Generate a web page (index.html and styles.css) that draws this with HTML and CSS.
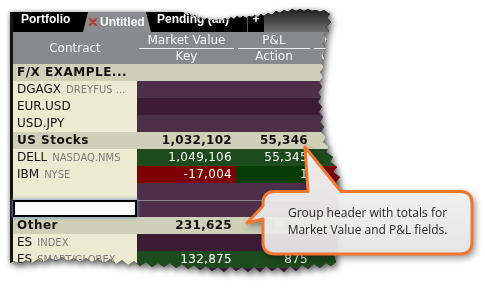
FILE: index.html
```html
<!DOCTYPE html>
<html lang="en">
<head>
    <meta charset="UTF-8">
    <title>Portfolio group header</title>
    <link rel="stylesheet" href="styles.css">
</head>
<body>
    <div class="sheet">
        <div class="paper">
            <div class="tabbar">
                <div class="tab tab-portfolio">Portfolio</div>
                <div class="tab tab-active">
                    <svg class="close" width="8" height="8" viewBox="0 0 8 8"><path d="M1 1L7 7M7 1L1 7" stroke="#c23a32" stroke-width="2.4" stroke-linecap="round"/></svg>
                    Untitled
                </div>
                <div class="tab tab-pending">Pending (all)</div>
                <div class="tab tab-plus">+</div>
                <div class="tab-rest"></div>
            </div>
            <div class="head">
                <div class="hc hc-contract">Contract</div>
                <div class="hc"><span class="top">Market Value</span><span>Key</span></div>
                <div class="hc"><span class="top">P&amp;L</span><span>Action</span></div>
                <div class="hc"><span class="top">Position</span><span>Quantity</span></div>
            </div>
            <div class="rows">
                <div class="row group"><div class="c">F/X EXAMPLE...</div><div class="n"></div><div class="n"></div><div></div></div>
                <div class="row pl"><div class="c">DGAGX<span class="ex">DREYFUS ...</span></div><div class="n"></div><div class="n"></div><div></div></div>
                <div class="row pd"><div class="c">EUR.USD</div><div class="n"></div><div class="n"></div><div></div></div>
                <div class="row pl"><div class="c">USD.JPY</div><div class="n"></div><div class="n"></div><div></div></div>
                <div class="row group"><div class="c">US Stocks</div><div class="n">1,032,102</div><div class="n">55,346</div><div></div></div>
                <div class="row g"><div class="c">DELL<span class="ex">NASDAQ.NMS</span></div><div class="n">1,049,106</div><div class="n">55,345</div><div></div></div>
                <div class="row r"><div class="c">IBM<span class="ex">NYSE</span></div><div class="n">-17,004</div><div class="n gd">1</div><div></div></div>
                <div class="row pl"><div class="c"></div><div class="n"></div><div class="n"></div><div></div></div>
                <div class="row pl sep"><div class="c sel"></div><div class="n"></div><div class="n"></div><div></div></div>
                <div class="row group"><div class="c">Other</div><div class="n">231,625</div><div class="n faint">1,275</div><div></div></div>
                <div class="row pd"><div class="c">ES<span class="ex">INDEX</span></div><div class="n"></div><div class="n"></div><div></div></div>
                <div class="row g"><div class="c">ES<span class="ex">SMART/GLOBEX</span></div><div class="n">132,875</div><div class="n">875</div><div></div></div>
                <div class="row pd"><div class="c"></div><div class="n"></div><div class="n"></div><div></div></div>
            </div>
        </div>
    </div>

    <svg class="callout" width="485" height="290" viewBox="0 0 485 290">
        <defs>
            <linearGradient id="fill" x1="0" y1="0" x2="0" y2="1">
                <stop offset="0" stop-color="#ffffff"/>
                <stop offset="1" stop-color="#ebebeb"/>
            </linearGradient>
        </defs>
        <path d="M275 191.5 L308 191.5 L305 147 L341 191.5 L460 191.5 Q472 191.5 472 203.5 L472 242 Q472 254 460 254 L275 254 Q263 254 263 242 L263 219 L247 223 L263 206 L263 203.5 Q263 191.5 275 191.5 Z"
              fill="url(#fill)" fill-opacity="0.92" stroke="#f27630" stroke-width="3" stroke-linejoin="round"/>
    </svg>
    <div class="callout-text">Group header with totals for<br>Market Value and P&amp;L fields.</div>
</body>
</html>
```

FILE: styles.css
```css
body {
    margin: 0;
    width: 485px;
    height: 290px;
    overflow: hidden;
    position: relative;
    background: #fff;
    font-family: "DejaVu Sans", Verdana, sans-serif;
}
.sheet {
    padding: 8px 0 0 10px;
    filter: drop-shadow(2px 3px 3px rgba(0, 0, 0, 0.5)) drop-shadow(0 0 2px rgba(0, 0, 0, 0.3));
}
.paper {
    width: 372px;
    height: 266px;
    border-left: 3px solid #141414;
    background: #4b2d47;
    clip-path: polygon(
        0 4px, 173px 4px,
        176px 7px, 179px 5px, 182px 9px, 185px 7px, 188px 11px, 191px 9px, 194px 12px, 197px 10px,
        200px 13px, 203px 11px, 206px 13px, 209px 11px, 212px 13px, 215px 10px, 218px 12px, 221px 9px,
        224px 11px, 227px 8px, 230px 10px, 233px 8px, 236px 10px, 239px 8px, 242px 9px, 245px 7px,
        248px 9px, 251px 6px, 254px 8px, 258px 5px, 262px 7px, 266px 3px, 270px 5px, 274px 2px,
        278px 4px, 282px 1px, 286px 3px, 290px 1px, 294px 3px, 298px 1px, 302px 3px, 306px 2px,
        310px 4px, 314px 2px, 318px 5px,
        320px 6px, 317px 10px, 321px 14px, 316px 19px, 319px 23px, 314px 27px, 317px 32px, 313px 36px,
        316px 41px, 312px 46px, 315px 50px, 311px 55px, 314px 59px, 310px 64px, 313px 69px, 309px 74px,
        312px 79px, 308px 84px, 311px 89px, 308px 94px, 312px 99px, 309px 104px, 313px 109px, 310px 114px,
        314px 119px, 311px 124px, 316px 129px, 313px 134px, 319px 139px, 316px 144px, 323px 149px,
        320px 154px, 327px 159px, 323px 164px, 330px 169px, 326px 174px, 329px 180px, 325px 187px,
        329px 197px, 325px 207px, 329px 217px, 326px 227px, 328px 237px, 324px 247px, 326px 254px,
        321px 258px, 316px 255px, 310px 260px, 304px 256px, 298px 261px, 292px 257px, 286px 263px,
        280px 258px, 274px 264px, 268px 259px, 262px 263px, 256px 258px, 250px 264px, 244px 259px,
        238px 264px, 232px 259px, 226px 263px, 220px 258px, 214px 264px, 208px 259px, 202px 263px,
        196px 258px, 190px 262px, 184px 257px, 178px 261px, 172px 256px, 166px 260px, 160px 255px,
        154px 259px, 148px 255px, 142px 259px, 136px 254px, 130px 258px, 124px 253px, 118px 257px,
        112px 252px, 106px 256px, 100px 251px, 94px 255px, 88px 251px, 82px 254px, 76px 250px,
        70px 254px, 64px 250px, 58px 253px, 52px 249px, 46px 253px, 40px 250px, 34px 254px,
        28px 251px, 22px 255px, 16px 252px, 10px 256px, 4px 253px, 0 255px);
}

/* tab strip */
.tabbar {
    display: flex;
    align-items: flex-end;
    height: 24px;
    background: #000;
}
.tab {
    height: 20px;
    line-height: 20px;
    box-sizing: border-box;
    color: #fff;
    font: bold 12px "Liberation Sans", Arial, sans-serif;
    white-space: nowrap;
}
.tab-portfolio {
    width: 70px;
    padding-left: 8px;
}
.tab-active {
    width: 68px;
    padding-left: 6px;
    display: flex;
    align-items: center;
    gap: 3px;
    background: #8a8c8f;
    clip-path: polygon(5px 0, calc(100% - 5px) 0, 100% 100%, 0 100%);
}
.tab-pending {
    width: 96px;
    padding-left: 6px;
}
.tab-plus {
    width: 17px;
    text-align: center;
    border-left: 1px solid #5a5a5a;
}
.tab-rest {
    flex: 1;
    align-self: stretch;
    background: linear-gradient(#1c1c1c, #6f6f6f);
}

/* column headers */
.head, .row {
    display: grid;
    grid-template-columns: 124px 99px 76px 70px;
}
.head {
    height: 32px;
    background: #87898c;
    color: #f4f4f4;
    font-size: 12px;
}
.hc {
    display: flex;
    flex-direction: column;
    text-align: center;
    white-space: nowrap;
}
.hc span {
    height: 15px;
    line-height: 15px;
}
.hc .top {
    height: 17px;
    line-height: 16px;
    margin: 0 2px;
    box-sizing: border-box;
    border-bottom: 1px solid #eeeeee;
}
.hc-contract {
    justify-content: center;
}

/* rows */
.row {
    height: 17px;
    line-height: 17px;
    font-size: 12px;
}
.c {
    padding-left: 4px;
    background: #ecead0;
    color: #111;
    white-space: nowrap;
    overflow: hidden;
}
.ex {
    margin-left: 5px;
    font-size: 10px;
    color: #7c7c7c;
}
.n {
    text-align: right;
    padding-right: 4px;
    color: #fff;
    letter-spacing: 0.3px;
    white-space: nowrap;
}
.group {
    background: #d0cfb8;
    font-weight: bold;
}
.group .c {
    background: transparent;
    letter-spacing: 0.5px;
}
.group .n {
    color: #111;
}
.group .faint {
    color: #8a8a80;
}
.pl { background: #4d2f49; }
.pd { background: #3d1b35; }
.g { background: #1d4b1d; }
.r { background: #7e0000; }
.gd { background: #063b06; }
.sep {
    box-shadow: inset 0 1px 0 #8e8590;
}
.sel {
    position: relative;
    z-index: 1;
    background: #fff;
    border: 2px solid #000;
    box-shadow: 0 0 3px 1px rgba(110, 150, 200, 0.8);
}

/* callout */
.callout {
    position: absolute;
    left: 0;
    top: 0;
    filter: drop-shadow(2px 3px 3px rgba(0, 0, 0, 0.4));
}
.callout-text {
    position: absolute;
    left: 263px;
    top: 191px;
    width: 209px;
    height: 60px;
    display: flex;
    align-items: center;
    justify-content: center;
    text-align: center;
    font: 12px/17px "Open Sans", "Noto Sans", sans-serif;
    color: #262626;
}
```
